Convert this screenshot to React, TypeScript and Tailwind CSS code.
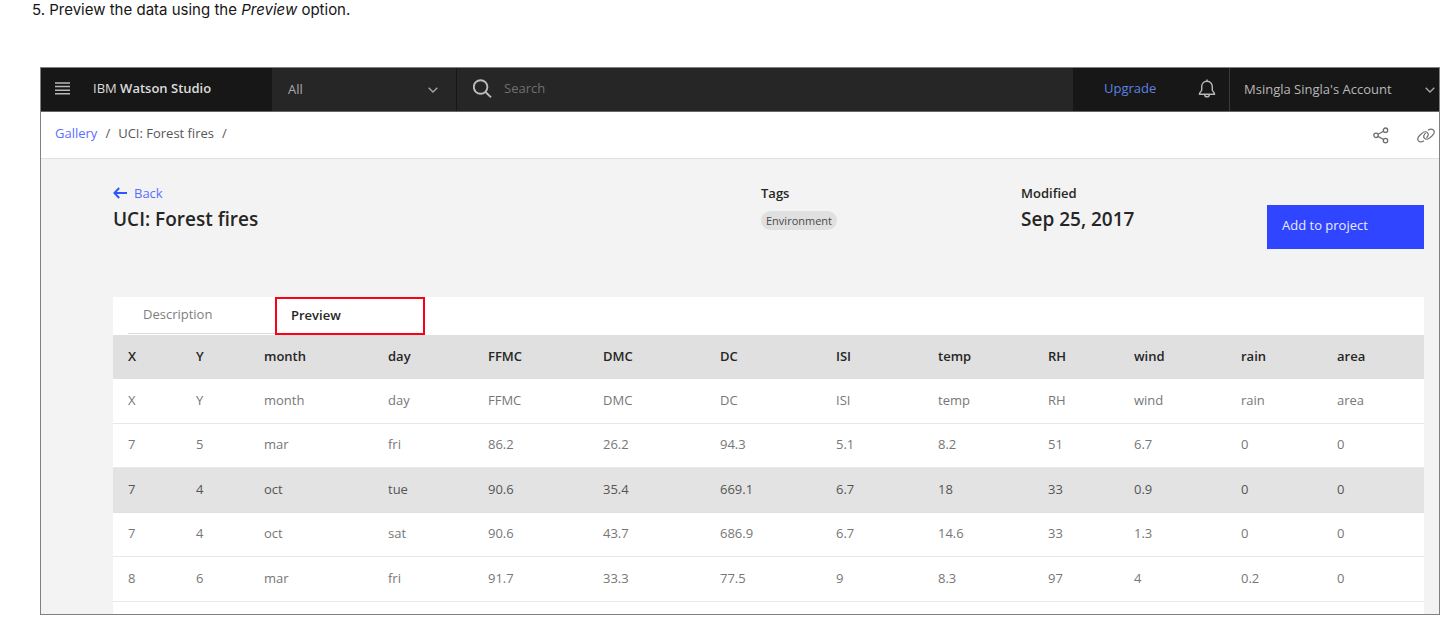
import React from "react";

const columns = [
  { name: "X", size: 68 },
  { name: "Y", size: 68 },
  { name: "month", size: 124 },
  { name: "day", size: 100 },
  { name: "FFMC", size: 115 },
  { name: "DMC", size: 117 },
  { name: "DC", size: 116 },
  { name: "ISI", size: 102 },
  { name: "temp", size: 110 },
  { name: "RH", size: 86 },
  { name: "wind", size: 107 },
  { name: "rain", size: 96 },
  { name: "area", size: 102 },
];

const totalSize = columns.reduce((sum, c) => sum + c.size, 0);

const rows = [
  ["X", "Y", "month", "day", "FFMC", "DMC", "DC", "ISI", "temp", "RH", "wind", "rain", "area"],
  ["7", "5", "mar", "fri", "86.2", "26.2", "94.3", "5.1", "8.2", "51", "6.7", "0", "0"],
  ["7", "4", "oct", "tue", "90.6", "35.4", "669.1", "6.7", "18", "33", "0.9", "0", "0"],
  ["7", "4", "oct", "sat", "90.6", "43.7", "686.9", "6.7", "14.6", "33", "1.3", "0", "0"],
  ["8", "6", "mar", "fri", "91.7", "33.3", "77.5", "9", "8.3", "97", "4", "0.2", "0"],
];

const highlightedRow = 2;

function MenuIcon() {
  return (
    <svg viewBox="0 0 16 13" className="h-[13px] w-4" stroke="#b8b8b8" strokeWidth="1.5" aria-hidden="true">
      <path d="M0 1h15M0 4.6h15M0 8.2h15M0 11.8h15" />
    </svg>
  );
}

function ChevronIcon() {
  return (
    <svg viewBox="0 0 10 6" className="h-[6px] w-[10px]" fill="none" stroke="#a8a8a8" strokeWidth="1.3" aria-hidden="true">
      <path d="M0.7 0.7 5 5 9.3 0.7" />
    </svg>
  );
}

function SearchIcon() {
  return (
    <svg viewBox="0 0 20 20" className="size-5" fill="none" stroke="#bcbcbc" strokeWidth="1.9" aria-hidden="true">
      <circle cx="7.600" cy="8" r="6.800" />
      <path d="M12.500 13 18 18.400" />
    </svg>
  );
}

function BellIcon() {
  return (
    <svg viewBox="0 0 18 19" className="h-[19px] w-[18px]" fill="none" stroke="#b8b8b8" strokeWidth="1.4" strokeLinejoin="round" aria-hidden="true">
      <path d="M9 2.300C5.600 2.300 3.700 4.800 3.700 7.800V11C3.700 12.300 1.400 13.200 1.400 15.200H16.600C16.600 13.200 14.300 12.300 14.300 11V7.800C14.300 4.800 12.400 2.300 9 2.300Z" />
      <path d="M9 0.600v1.700M6.600 15.400a2.400 2.400 0 0 0 4.800 0" />
    </svg>
  );
}

function ShareIcon() {
  return (
    <svg viewBox="0 0 16 17" className="h-[17px] w-4" fill="none" stroke="#6f6f6f" strokeWidth="1.3" aria-hidden="true">
      <circle cx="3" cy="8.3" r="2.200" />
      <circle cx="12.500" cy="3.200" r="2.200" />
      <circle cx="12.500" cy="13.600" r="2.200" />
      <path d="M5 7.200 10.500 4.300M5 9.400l5.500 3.100" />
    </svg>
  );
}

function LinkIcon() {
  return (
    <svg viewBox="0 0 18 15" className="h-[15px] w-[18px]" fill="none" stroke="#6f6f6f" strokeWidth="1.2" strokeLinecap="round" aria-hidden="true">
      <path d="M6.600 13C4.800 14.200 2.700 14.100 1.500 12.800 0.200 11.300 0.800 9.300 2.600 7.500L5.200 5.100C6.900 3.500 9.200 3.300 10.400 4.600 11.700 6 11.300 8 9.700 9.600" />
      <path d="M11.400 2C13.200 0.800 15.300 0.900 16.500 2.200 17.800 3.700 17.200 5.700 15.400 7.500L12.800 9.900C11.100 11.500 8.800 11.700 7.600 10.400 6.300 9 6.700 7 8.300 5.400" />
    </svg>
  );
}

function BackArrow() {
  return (
    <svg viewBox="0 0 14 12" className="h-3 w-[14px]" fill="none" stroke="#2f55ff" strokeWidth="1.9" aria-hidden="true">
      <path d="M1.400 6H14M6.200 1 1.400 6l4.800 5" />
    </svg>
  );
}

function TopBar() {
  return (
    <header className="flex h-11 border-b border-[#666] bg-[#171717] text-[#c6c6c6]">
      <div className="flex w-[231px] shrink-0 items-center gap-[22px] pb-0.5 pl-[14px]">
        <button type="button" aria-label="Menu">
          <MenuIcon />
        </button>
        <span className="whitespace-nowrap text-[#dcdcdc]">
          IBM <b className="font-semibold">Watson Studio</b>
        </span>
      </div>
      <button
        type="button"
        className="flex w-[185px] shrink-0 items-center justify-between border-r border-[#171717] bg-[#262626] pr-[18px] pl-4 text-[#aaa]"
      >
        All
        <ChevronIcon />
      </button>
      <label className="flex min-w-0 flex-1 items-center gap-[11px] bg-[#262626] pb-0.5 pl-4">
        <SearchIcon />
        <input
          type="search"
          aria-label="Search"
          placeholder="Search"
          className="min-w-0 flex-1 bg-transparent outline-none placeholder:text-[#6f6f6f]"
        />
      </label>
      <div className="flex w-[157px] shrink-0 items-center justify-between border-r border-[#393939] pr-[13px] pb-0.5 pl-[31px]">
        <a href="#upgrade" className="text-[#5a84e0]">
          Upgrade
        </a>
        <button type="button" aria-label="Notifications">
          <BellIcon />
        </button>
      </div>
      <button type="button" className="flex w-[209px] shrink-0 items-center justify-between pr-1 pl-[14px] text-[#b8b8b8]">
        Msingla Singla's Account
        <ChevronIcon />
      </button>
    </header>
  );
}

function Breadcrumb() {
  return (
    <div className="flex h-[47px] items-center justify-between border-b border-[#e0e0e0] bg-white pr-1 pl-[14px]">
      <nav aria-label="Breadcrumb" className="flex gap-2 pb-0.5 text-[#565656]">
        <a href="#gallery" className="text-[#5a6fff]">
          Gallery
        </a>
        <span>/</span>
        <span>UCI: Forest fires</span>
        <span>/</span>
      </nav>
      <div className="flex items-center gap-7">
        <button type="button" aria-label="Share">
          <ShareIcon />
        </button>
        <button type="button" aria-label="Copy link">
          <LinkIcon />
        </button>
      </div>
    </div>
  );
}

function Summary() {
  return (
    <section className="flex h-[114px] items-start text-[#262626]">
      <div className="flex-1">
        <a href="#back" className="flex items-center gap-[7px] leading-5 text-[#5a6fff]">
          <BackArrow />
          Back
        </a>
        <h1 className="mt-1 text-[19px] leading-6 font-semibold">UCI: Forest fires</h1>
      </div>
      <div className="w-[260px]">
        <h2 className="leading-5 font-semibold">Tags</h2>
        <span className="mt-2 inline-block rounded-full bg-[#e0e0e0] px-[5px] text-[11px] leading-[19px] text-[#4a4a4a]">
          Environment
        </span>
      </div>
      <div className="w-[246px]">
        <h2 className="leading-5 font-semibold">Modified</h2>
        <p className="mt-1 text-[19px] leading-6 font-semibold">Sep 25, 2017</p>
      </div>
      <button type="button" className="mt-[22px] h-11 w-[157px] bg-[#3045ff] pb-0.5 pl-[15px] text-left text-[#e8ebff]">
        Add to project
      </button>
    </section>
  );
}

function PreviewPanel() {
  return (
    <section className="bg-white pb-3">
      <div role="tablist" className="flex h-[38px] px-[15px]">
        <button
          type="button"
          role="tab"
          aria-selected="false"
          className="mb-px w-[147px] border-b border-[#dcdcdc] pl-[15px] text-left text-[#808080]"
        >
          Description
        </button>
        <button
          type="button"
          role="tab"
          aria-selected="true"
          className="w-[150px] border-2 border-[#fa0019] pl-[14px] text-left font-semibold text-[#262626]"
        >
          Preview
        </button>
      </div>
      <table className="w-full table-fixed border-collapse text-left">
        <colgroup>
          {columns.map((c) => (
            <col key={c.name} style={{ width: `${(c.size / totalSize) * 100}%` }} />
          ))}
        </colgroup>
        <thead className="bg-[#e0e0e0] text-[#262626]">
          <tr className="h-11">
            {columns.map((c) => (
              <th key={c.name} scope="col" className="p-0 pl-[15px] font-semibold">
                {c.name}
              </th>
            ))}
          </tr>
        </thead>
        <tbody className="text-[#777]">
          {rows.map((row, i) => (
            <tr
              key={i}
              className={
                i === highlightedRow
                  ? "h-[45px] border-b border-[#e0e0e0] bg-[#e3e3e3] text-[#555]"
                  : "h-11 border-b border-[#e8e8e8] last:h-[45px]"
              }
            >
              {row.map((value, j) => (
                <td key={j} className="p-0 pl-[15px]">
                  {value}
                </td>
              ))}
            </tr>
          ))}
        </tbody>
      </table>
    </section>
  );
}

export default function App() {
  return (
    <main className="bg-white pb-6 font-['Inter',sans-serif]">
      <p className="h-[67px] pl-8 text-[15px] leading-5 text-[#161616]">
        5. Preview the data using the <em>Preview</em> option.
      </p>
      <div className="ml-10 border border-[#808080] bg-[#f3f3f3] font-['Open_Sans','Noto_Sans',sans-serif] text-[13px]">
        <TopBar />
        <Breadcrumb />
        <div className="pt-6 pr-[15px] pl-[72px]">
          <Summary />
          <PreviewPanel />
        </div>
      </div>
    </main>
  );
}
